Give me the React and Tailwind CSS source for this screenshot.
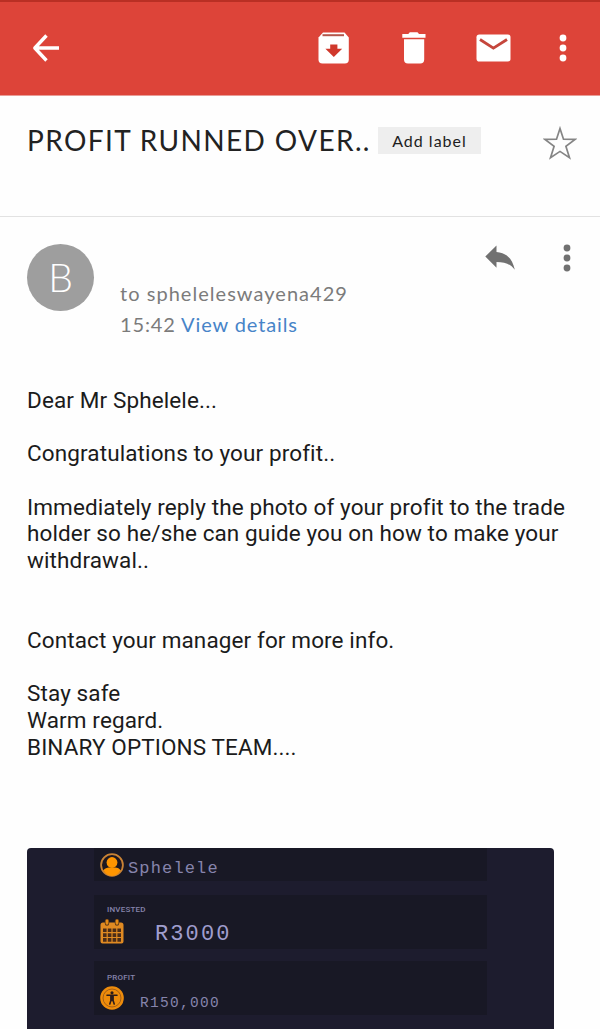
import React from 'react';

const BackIcon = () => (
  <svg className="w-7 h-7" viewBox="0 0 28 28" fill="none" stroke="#fff" strokeWidth="3.4">
    <path d="M27 14H2.8M14.500 1.500L2.800 14L14.500 26.500" strokeLinejoin="round" />
  </svg>
);

const ArchiveIcon = () => (
  <svg className="w-8 h-8" viewBox="0 0 32 32">
    <path d="M5 0.5h21.5l4.3 5V27.5a4 4 0 0 1-4 4H4.5a4 4 0 0 1-4-4V5.5z" fill="#fff" />
    <path d="M4.500 3.200h21.500" stroke="#b5564b" strokeWidth="2" />
    <path d="M12.200 12.500h7.200v4.300h4.800l-8.400 8.200l-8.400-8.200h4.800z" fill="#d0382c" />
  </svg>
);

const TrashIcon = () => (
  <svg className="w-6 h-8" viewBox="0 0 24 32">
    <path d="M0.3 2h6l1.5-1.700h7.700l1.500 1.700h6.500v3.700H0.300zM2 7.200h20.200V27.500a4 4 0 0 1-4 4H6a4 4 0 0 1-4-4z" fill="#fff" />
  </svg>
);

const MailIcon = () => (
  <svg className="w-[35px] h-7" viewBox="0 0 35 28">
    <rect x="0.5" y="0.5" width="34" height="27" rx="2.8" fill="#fff" />
    <path d="M4 5.500L17.400 14.200L31 5.500" fill="none" stroke="#c5463c" strokeWidth="2.8" />
  </svg>
);

const DotsIcon = ({ className }) => (
  <svg className={className} viewBox="0 0 8 28" fill="currentColor">
    <circle cx="4" cy="4" r="3.4" />
    <circle cx="4" cy="14" r="3.4" />
    <circle cx="4" cy="24" r="3.4" />
  </svg>
);

const StarIcon = () => (
  <svg className="w-[34px] h-[34px]" viewBox="0 0 34 34" fill="none" stroke="#858585" strokeWidth="1.7">
    <path d="M17 2.500L20.500 13.200L32 13.400L22.900 20.200L26.500 31.700L17 25.400L7.500 31.700L11.100 20.200L2 13.400L13.500 13.200Z" />
  </svg>
);

const ReplyIcon = () => (
  <svg className="w-[31px] h-[26px]" viewBox="0 0 31 26">
    <path d="M0.300 12.500L11.500 1.500V8C20.500 9 27 13 29.800 25.800C25.500 20 20 18 11.500 18V23.800Z" fill="#717171" />
  </svg>
);

const UserIcon = () => (
  <svg className="w-6 h-6" viewBox="0 0 24 24">
    <circle cx="12" cy="12" r="10.9" fill="#1d1720" stroke="#c98335" strokeWidth="1.8" />
    <path d="M3.400 17.500C5 14.800 8 14.200 9.600 14.500h4.800C17 14.200 19.500 15.200 20.600 17.500C18.500 21 15.500 22.900 12 22.900S5.500 21 3.400 17.500z" fill="#ff9500" />
    <circle cx="12" cy="9.500" r="5.400" fill="#ff9500" />
  </svg>
);

const CalendarIcon = () => (
  <svg className="w-6 h-[25px]" viewBox="0 0 24 25">
    <path d="M0.500 6a2.500 2.500 0 0 1 2.500-2.500h18a2.500 2.500 0 0 1 2.500 2.500v16.500a2 2 0 0 1-2 2h-19a2 2 0 0 1-2-2z" fill="#e08a22" />
    <path d="M7 2v2.500M17 2v2.500" stroke="#5a3718" strokeWidth="4.400" strokeLinecap="round" />
    <path d="M7 1.800v2.500M17 1.800v2.500" stroke="#e48b17" strokeWidth="2.800" strokeLinecap="round" />
    <path d="M3 11.300h18M3 16.100h18M3 20.900h18" stroke="#4a2c18" strokeWidth="3.600" strokeDasharray="3.600 1.200" />
  </svg>
);

const AccessIcon = () => (
  <svg className="w-6 h-6" viewBox="0 0 24 24">
    <circle cx="12" cy="12" r="11.8" fill="#ee8c0b" />
    <circle cx="12" cy="12" r="9" fill="none" stroke="#a45f18" strokeWidth="1" />
    <circle cx="12" cy="6.8" r="1.600" fill="#2b1c1c" />
    <path d="M7 9.300L17 9.300M12 9.500v5M10.900 10v4.500L9.800 18M13.100 10v4.500L14.200 18" fill="none" stroke="#2b1c1c" strokeWidth="1.6" strokeLinecap="round" />
  </svg>
);

const bodyLines = [
  'Dear Mr Sphelele...',
  '',
  'Congratulations to your profit..',
  '',
  'Immediately reply the photo of your profit to the trade',
  'holder so he/she can guide you on how to make your',
  'withdrawal..',
  '',
  '',
  'Contact your manager for more info.',
  '',
  'Stay safe',
  'Warm regard.',
  'BINARY OPTIONS TEAM....',
];

const App = () => {
  return (
    <div className="w-[600px] h-[1029px] overflow-hidden bg-[#fefefe] flex flex-col font-['Lato',sans-serif]">
      {/* Toolbar */}
      <header className="h-[96px] shrink-0 flex items-center bg-[#dd4439] border-t-2 border-t-[#b92f24] border-b border-b-[#e99c96] pb-[2px] pl-8 pr-[33px] text-white">
        <BackIcon />
        <div className="ml-auto flex items-center">
          <ArchiveIcon />
          <div className="ml-[52px]"><TrashIcon /></div>
          <div className="ml-[50px]"><MailIcon /></div>
          <DotsIcon className="ml-12 w-2 h-7" />
        </div>
      </header>

      {/* Subject */}
      <div className="h-[121px] shrink-0 flex items-start border-b border-[#e2e2e2] pl-[27px] pr-[23px] pt-[30px]">
        <h1 className="-mt-px w-[351px] whitespace-nowrap text-[28px] leading-[30px] tracking-[1.38px] text-[#222]">PROFIT RUNNED OVER..</h1>
        <span className="mt-px w-[103px] h-[27px] bg-[#eeeeee] text-center whitespace-nowrap text-base leading-[27px] tracking-[1px] text-[#1d1d1d]">Add label</span>
        <div className="ml-auto"><StarIcon /></div>
      </div>

      {/* Sender */}
      <div className="h-[170px] shrink-0 flex items-start pl-[27px] pr-[29px] pt-[27px]">
        <div className="w-[67px] h-[67px] rounded-full bg-[#9e9e9e] flex items-center justify-center text-[39px] font-light leading-none text-white">B</div>
        <div className="ml-[26px] pt-[33px] whitespace-nowrap text-xl leading-[32px] text-[#7b7b7b]">
          <div className="tracking-[1.04px]">to spheleleswayena429</div>
          <div className="-mt-px tracking-[0.88px]">15:42 <span className="text-[#4784c8]">View details</span></div>
        </div>
        <div className="ml-auto flex items-start">
          <ReplyIcon />
          <DotsIcon className="ml-[47px] w-2 h-7 text-[#717171]" />
        </div>
      </div>

      {/* Message */}
      <div className="h-[461px] shrink-0 pl-[27px] font-['Roboto',sans-serif] text-[22.5px] tracking-[0.115px] leading-[26.67px] text-[#1b1b1b]">
        {bodyLines.map((line, i) => (
          <p key={i} className="h-[26.67px] whitespace-nowrap">{line}</p>
        ))}
      </div>

      {/* Attachment preview */}
      <div className="ml-[27px] w-[527px] h-[181px] shrink-0 rounded-t bg-[#1d1c2e] overflow-hidden flex flex-col font-['Liberation_Mono',monospace] text-[#8684ac]">
        <div className="ml-[67px] w-[393px] h-[33px] flex items-center bg-[#181825] pl-[6px]">
          <UserIcon />
          <span className="ml-1 mt-[7px] text-[17px] leading-none tracking-[1.15px]">Sphelele</span>
        </div>
        <div className="ml-[67px] mt-[14px] w-[393px] h-[54px] bg-[#181825] pl-[6px] pt-[10px]">
          <div className="pl-[7px] font-['Roboto',sans-serif] text-[8px] leading-[9px] font-medium tracking-[0.2px]">INVESTED</div>
          <div className="mt-[5px] h-[25px] flex items-center">
            <CalendarIcon />
            <span className="ml-[31px] mt-[7px] text-[22px] leading-none tracking-[2.1px] text-[#a09ece]">R3000</span>
          </div>
        </div>
        <div className="ml-[67px] mt-3 w-[393px] h-[54px] bg-[#181825] pl-[6px] pt-[12px]">
          <div className="pl-[7px] font-['Roboto',sans-serif] text-[8px] leading-[9px] font-medium tracking-[0.2px]">PROFIT</div>
          <div className="mt-[4px] h-6 flex items-center">
            <AccessIcon />
            <span className="ml-4 mt-[11px] text-[14.5px] leading-none tracking-[1.3px]">R150,000</span>
          </div>
        </div>
      </div>
    </div>
  );
};

export default App;
